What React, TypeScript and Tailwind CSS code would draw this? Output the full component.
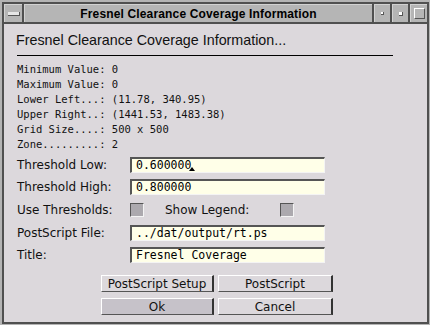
import React from 'react';

const sans = "font-['DejaVu_Sans',sans-serif]";
const mono = "font-['DejaVu_Sans_Mono',monospace]";

function Field(props: { value: string; caret?: boolean }) {
	return (
		<div className={`flex items-center w-[195px] h-[16px] bg-[#ffffe8] border-t-2 border-l-2 border-b border-r border-t-[#555] border-l-[#555] border-b-[#f4f4f4] border-r-[#f4f4f4] pl-[4px] text-[11.5px] leading-none text-black whitespace-pre ${mono}`}>
			{props.value}
			{props.caret && (
				<svg width="6" height="4" viewBox="0 0 6 4" className="-ml-[2px] mt-[7px]">
					<path d="M0 4 L3 0 L6 4 Z" fill="#000" />
				</svg>
			)}
		</div>
	);
}

function Check() {
	return <div className="w-[14px] h-[14px] bg-[#aca9ae] border-t border-l border-b border-r border-t-[#555] border-l-[#555] border-b-[#f4f4f4] border-r-[#f4f4f4]" />;
}

function Row(props: { label: string; className?: string; children: React.ReactNode }) {
	return (
		<div className={`flex items-center h-[16px] ${props.className ?? ''}`}>
			<div className={`w-[113px] text-[12px] leading-none text-[#111] ${sans}`}>{props.label}</div>
			{props.children}
		</div>
	);
}

function Button(props: { label: string; width: string; active?: boolean }) {
	return (
		<div className={`${props.width} h-[17px] flex items-center justify-center border-t border-l border-t-white border-l-white border-b border-b-[#555] border-r-2 border-r-[#333] text-[12px] leading-none text-[#111] ${sans} ${props.active ? 'bg-[#c6c2c9]' : 'bg-[#dcd8dc]'}`}>
			{props.label}
		</div>
	);
}

export default function App() {
	const info = [
		'Minimum Value: 0',
		'Maximum Value: 0',
		'Lower Left...: (11.78, 340.95)',
		'Upper Right..: (1441.53, 1483.38)',
		'Grid Size....: 500 x 500',
		'Zone.........: 2',
	];

	return (
		<div className="w-[430px] h-[325px] bg-[#b4b4b4] pl-[2px] pr-[1px] pt-[2px] pb-[1px]">
			<div className="h-full flex flex-col border-2 border-[#505050]">
				{/* title bar */}
				<div className="flex h-[20px] gap-[2px] bg-[#505050] pb-[2px]">
					<div className="w-[18px] bg-[#b5b5b5] border-t border-l border-[#d2d2d2] flex items-center justify-center">
						<div className="w-[12px] h-[4px] bg-[#e6e6e6] border-b border-r border-[#555] mt-[1px]" />
					</div>
					<div className="flex-1 bg-[#b5b5b5] border-t border-l border-[#d2d2d2] flex items-center justify-center">
						<span className="font-['Liberation_Sans',sans-serif] font-bold text-[12px] tracking-[0.15px] text-black leading-none">Fresnel Clearance Coverage Information</span>
					</div>
					<div className="w-[16px] bg-[#b5b5b5] border-t border-l border-[#d2d2d2] flex items-center justify-center">
						<div className="w-[2px] h-[2px] bg-white border-b border-r border-[#555] box-content" />
					</div>
					<div className="w-[16px] bg-[#b5b5b5] border-t border-l border-[#d2d2d2] flex items-center justify-center">
						<div className="w-[4px] h-[4px] bg-white border-b border-r border-[#555]" />
					</div>
					<div className="w-[17px] bg-[#b5b5b5] border-t border-l border-[#d2d2d2] flex items-center justify-center">
						<div className="w-[11px] h-[11px] border-t border-l border-white border-b border-r border-b-[#555] border-r-[#555]" />
					</div>
				</div>

				{/* content */}
				<div className="flex-1 bg-[#dcd8dc] pl-[13px] flex flex-col">
					<div className="pt-[8px] -ml-[1px] h-[25px] font-['Liberation_Sans',sans-serif] text-[14.3px] leading-[17px] text-[#111]">
						Fresnel Clearance Coverage Information...
					</div>
					<div className="mt-[6px] w-[376px] h-[1px] bg-black" />

					<div className={`mt-[6px] flex flex-col text-[10.5px] leading-[15px] text-[#111] whitespace-pre ${mono}`}>
						{info.map((line) => (
							<div key={line}>{line}</div>
						))}
					</div>

					<div className="mt-[5px] flex flex-col">
						<Row label="Threshold Low:">
							<Field value="0.600000" caret />
						</Row>
						<Row label="Threshold High:" className="mt-[6px]">
							<Field value="0.800000" />
						</Row>
						<Row label="Use Thresholds:" className="mt-[7px]">
							<Check />
							<div className={`ml-[21px] w-[115px] text-[12px] leading-none text-[#111] ${sans}`}>Show Legend:</div>
							<Check />
						</Row>
						<Row label="PostScript File:" className="mt-[7px]">
							<Field value="../dat/output/rt.ps" />
						</Row>
						<Row label="Title:" className="mt-[6px]">
							<Field value="Fresnel Coverage" />
						</Row>
					</div>

					<div className="ml-[84px] mt-[12px] grid grid-cols-[113px_115px] gap-x-[4px] gap-y-[6px]">
						<Button label="PostScript Setup" width="w-[113px]" />
						<Button label="PostScript" width="w-[115px]" />
						<Button label="Ok" width="w-[113px]" active />
						<Button label="Cancel" width="w-[115px]" />
					</div>
				</div>
			</div>
		</div>
	);
}
